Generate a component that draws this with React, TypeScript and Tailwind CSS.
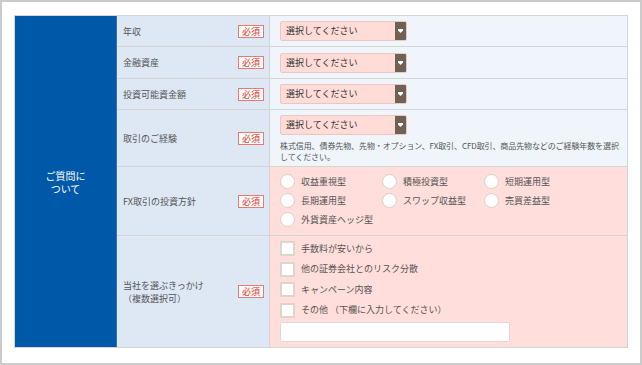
import React from 'react';

const font = { fontFamily: '"Noto Sans CJK JP", "Noto Sans", sans-serif' };

const Badge: React.FC = () => (
  <span className="flex h-[13px] w-[26px] shrink-0 items-center justify-center border border-[#e77a70] bg-white text-[9px] font-medium leading-none text-[#e0564a]">
    必須
  </span>
);

const Select: React.FC = () => (
  <div className="flex h-[20px] w-[127px] overflow-hidden rounded-[2px] border border-[#ecc7c2] bg-[#ffdcd8]">
    <span className="flex-1 pl-[5px] text-[9px] leading-[18px] text-[#333]">選択してください</span>
    <span className="flex w-[11px] items-center justify-center bg-[#6e6252]">
      <svg width="5" height="4" viewBox="0 0 5 4">
        <polygon points="0,0 5,0 5,1.4 2.5,4 0,1.4" fill="#fff" />
      </svg>
    </span>
  </div>
);

const Radio: React.FC<{ label: string }> = ({ label }) => (
  <div className="flex w-[102px] items-center gap-[6px]">
    <span className="h-[15px] w-[15px] shrink-0 rounded-full border-[1.5px] border-[#d9d0c2] bg-white" />
    <span className="text-[9px] text-[#555]">{label}</span>
  </div>
);

const Check: React.FC<{ label: string }> = ({ label }) => (
  <div className="flex items-center gap-[6px]">
    <span className="h-[15px] w-[15px] shrink-0 border-2 border-[#ddd6ca] bg-white" />
    <span className="text-[9px] text-[#555]">{label}</span>
  </div>
);

const Label: React.FC<{ children: React.ReactNode }> = ({ children }) => (
  <div className="flex w-[153px] shrink-0 items-center justify-between border-r border-[#d4d4d4] bg-[#dde8f4] pl-[6px] pr-[5px]">
    <span className="text-[9px] leading-[13px] text-[#555]">{children}</span>
    <Badge />
  </div>
);

export default function App() {
  return (
    <div style={font} className="h-[365px] w-[642px] border-2 border-[#cbcbcb] bg-white pl-[12px] pt-[13px]">
      <div className="flex w-[614px] border border-[#d4d4d4]">
        <div className="flex w-[102px] shrink-0 items-center justify-center border-r border-[#3d6fa3] bg-[#0058a8]">
          <span className="text-center text-[10px] leading-[13px] text-white">
            ご質問に
            <br />
            ついて
          </span>
        </div>
        <div className="flex flex-1 flex-col">
          <div className="flex h-[31px] border-b border-[#d4d4d4]">
            <Label>年収</Label>
            <div className="flex flex-1 items-center bg-[#eff5fa] pl-[10px]">
              <Select />
            </div>
          </div>
          <div className="flex h-[32px] border-b border-[#d4d4d4]">
            <Label>金融資産</Label>
            <div className="flex flex-1 items-center bg-[#eff5fa] pl-[10px]">
              <Select />
            </div>
          </div>
          <div className="flex h-[31px] border-b border-[#d4d4d4]">
            <Label>投資可能資金額</Label>
            <div className="flex flex-1 items-center bg-[#eff5fa] pl-[10px]">
              <Select />
            </div>
          </div>
          <div className="flex h-[57px] border-b border-[#d4d4d4]">
            <Label>取引のご経験</Label>
            <div className="flex-1 bg-[#eff5fa] pl-[10px] pr-[2px] pt-[5px]">
              <Select />
              <p className="mt-[5px] text-[8px] leading-[11px] tracking-[-0.1px] text-[#555]">
                株式信用、債券先物、先物・オプション、FX取引、CFD取引、商品先物などのご経験年数を選択してください。
              </p>
            </div>
          </div>
          <div className="flex h-[69px] border-b border-[#d4d4d4]">
            <Label>FX取引の投資方針</Label>
            <div className="flex flex-1 flex-wrap content-start gap-y-[4px] bg-[#ffdedb] pl-[10px] pt-[7px]">
              <Radio label="収益重視型" />
              <Radio label="積極投資型" />
              <Radio label="短期運用型" />
              <Radio label="長期運用型" />
              <Radio label="スワップ収益型" />
              <Radio label="売買差益型" />
              <Radio label="外貨資産ヘッジ型" />
            </div>
          </div>
          <div className="flex h-[111px]">
            <Label>
              当社を選ぶきっかけ
              <br />
              （複数選択可）
            </Label>
            <div className="flex flex-1 flex-col gap-[5.5px] bg-[#ffdedb] pl-[10px] pt-[5px]">
              <Check label="手数料が安いから" />
              <Check label="他の証券会社とのリスク分散" />
              <Check label="キャンペーン内容" />
              <Check label="その他 （下欄に入力してください）" />
              <div className="mt-[-1px] h-[20px] w-[230px] rounded-[2px] border border-[#e5d5d2] bg-white" />
            </div>
          </div>
        </div>
      </div>
    </div>
  );
}
